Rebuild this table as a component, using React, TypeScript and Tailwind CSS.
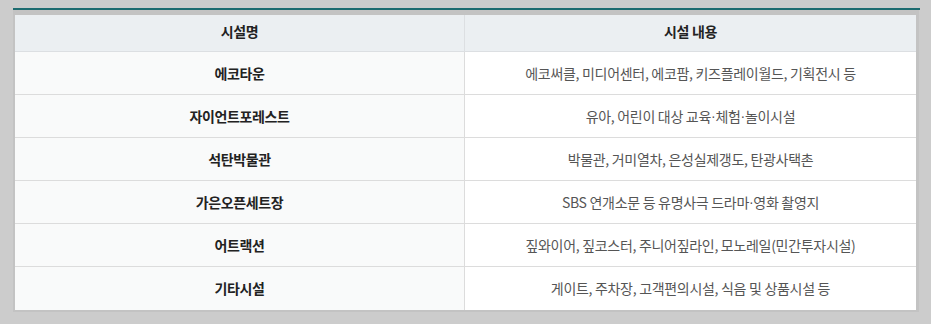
import React from "react";

const rows: [string, string][] = [
  ["에코타운", "에코써클, 미디어센터, 에코팜, 키즈플레이월드, 기획전시 등"],
  ["자이언트포레스트", "유아, 어린이 대상 교육·체험·놀이시설"],
  ["석탄박물관", "박물관, 거미열차, 은성실제갱도, 탄광사택촌"],
  ["가은오픈세트장", "SBS 연개소문 등 유명사극 드라마·영화 촬영지"],
  ["어트랙션", "짚와이어, 짚코스터, 주니어짚라인, 모노레일(민간투자시설)"],
  ["기타시설", "게이트, 주차장, 고객편의시설, 식음 및 상품시설 등"],
];

function withDots(s: string) {
  const parts = s.split("·");
  return parts.map((p, i) => (
    <React.Fragment key={i}>
      {p}
      {i < parts.length - 1 && (
        <span style={{ fontFamily: '"Liberation Sans", sans-serif' }}>·</span>
      )}
    </React.Fragment>
  ));
}

export default function App() {
  return (
    <div
      className="w-[931px] h-[324px] bg-[#cccccc] pt-[8px] pl-[13px]"
      style={{ fontFamily: '"Noto Sans CJK KR", "Noto Sans", sans-serif' }}
    >
      <div className="w-[907px] border-t-2 border-[#1d6b6f]">
        <div className="w-[906px] border-t-[5px] border-l-2 border-r-[3px] border-b-2 border-[#c3c3c3]">
          <div className="grid grid-cols-[450px_451px] bg-[#ebeff2] h-[37px] border-b border-[#dcdfe2]">
            <div className="flex items-center justify-center pb-[3px] border-r border-[#dcdfe2] text-[14px] font-bold text-[#222] tracking-[-0.3px]">
              시설명
            </div>
            <div className="flex items-center justify-center pb-[3px] text-[14px] font-bold text-[#222] tracking-[-0.3px]">
              시설 내용
            </div>
          </div>
          {rows.map(([a, b], i) => (
            <div
              key={a}
              className={`grid grid-cols-[450px_451px] h-[43px] ${i < rows.length - 1 ? "border-b border-[#dcdcdc]" : ""}`}
            >
              <div className="flex items-center justify-center bg-[#f9fafa] border-r border-[#dcdcdc] text-[14px] font-semibold text-[#222] tracking-[-0.4px]">
                {a}
              </div>
              <div className="flex items-center justify-center bg-white text-[14px] text-[#555] tracking-[-0.3px]">
                {withDots(b)}
              </div>
            </div>
          ))}
        </div>
      </div>
    </div>
  );
}
